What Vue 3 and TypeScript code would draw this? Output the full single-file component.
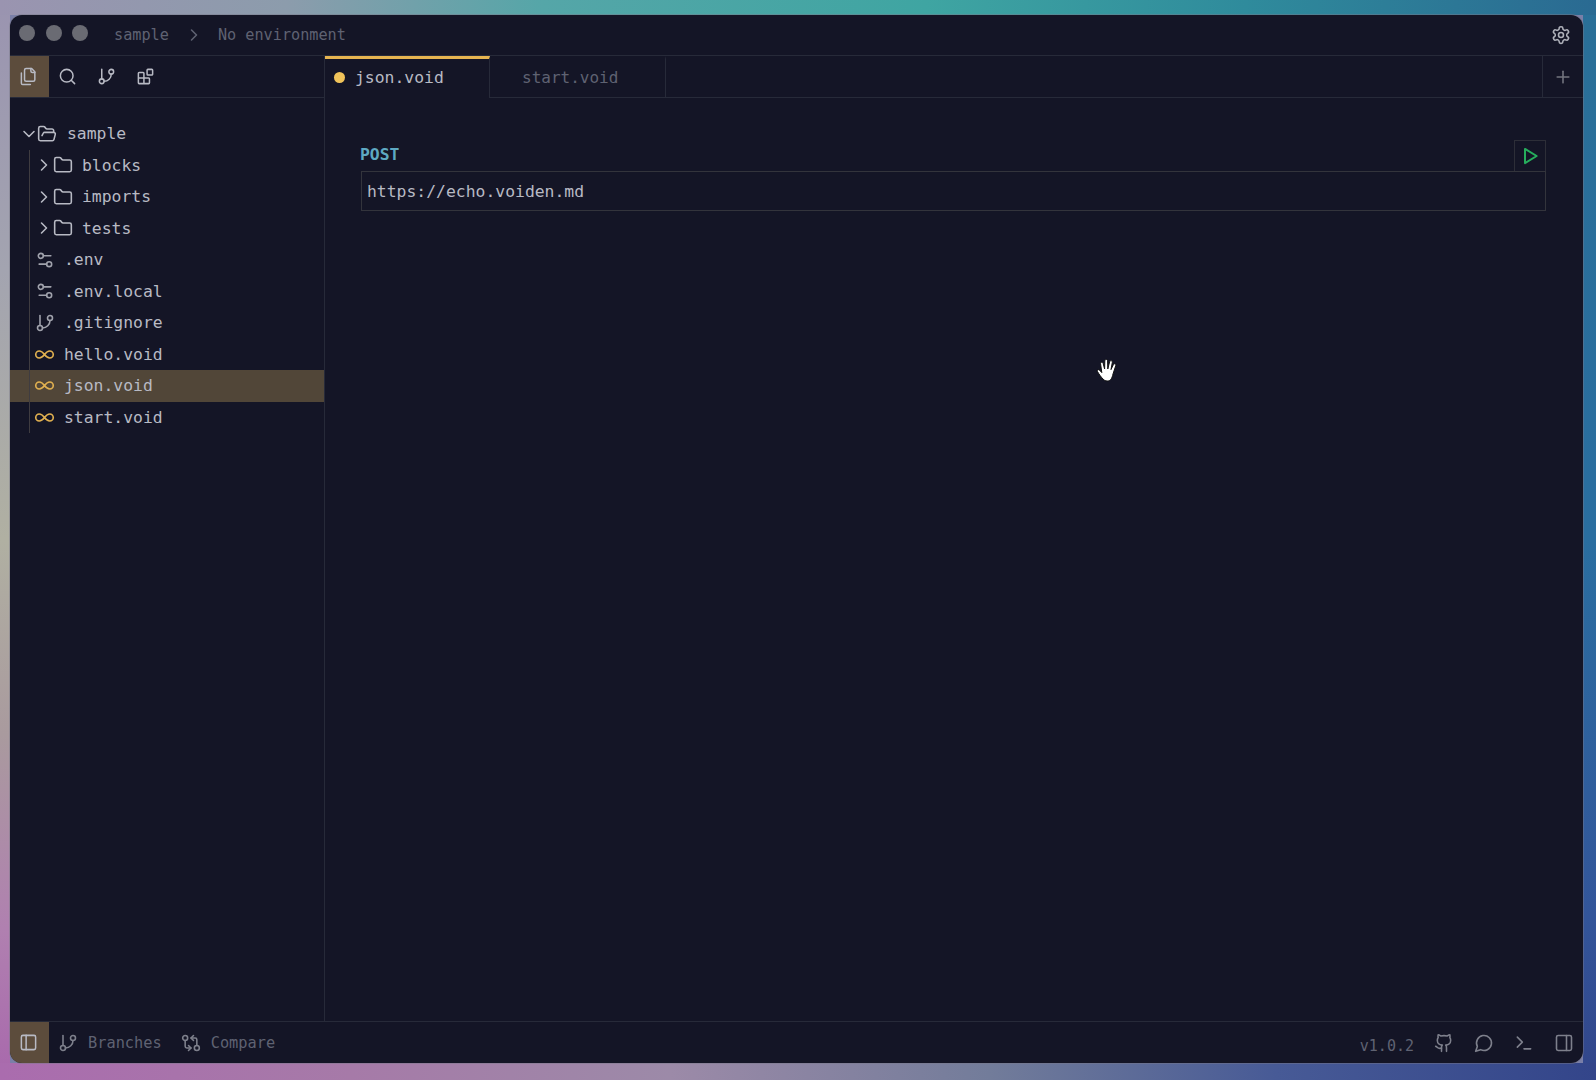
<script setup lang="ts">
const icons: Record<string, string> = {
  files:
    '<path d="M20 7h-3a2 2 0 0 1-2-2V2"/><path d="M9 18a2 2 0 0 1-2-2V4a2 2 0 0 1 2-2h7l4 4v10a2 2 0 0 1-2 2Z"/><path d="M3 7.6v12.8A1.6 1.6 0 0 0 4.6 22h9.8"/>',
  search: '<circle cx="11" cy="11" r="8"/><path d="m21 21-4.3-4.3"/>',
  branch:
    '<path d="M6 3v12"/><circle cx="18" cy="6" r="3"/><circle cx="6" cy="18" r="3"/><path d="M18 9a9 9 0 0 1-9 9"/>',
  blocks:
    '<rect x="14" y="3" width="7" height="7" rx="1"/><path d="M10 21V8a1 1 0 0 0-1-1H4a1 1 0 0 0-1 1v12a1 1 0 0 0 1 1h12a1 1 0 0 0 1-1v-5a1 1 0 0 0-1-1H3"/>',
  folder:
    '<path d="M20 20a2 2 0 0 0 2-2V8a2 2 0 0 0-2-2h-7.9a2 2 0 0 1-1.69-.9L9.6 3.9A2 2 0 0 0 7.93 3H4a2 2 0 0 0-2 2v13a2 2 0 0 0 2 2Z"/>',
  folderOpen:
    '<path d="m6 14 1.5-2.9A2 2 0 0 1 9.24 10H20a2 2 0 0 1 1.94 2.5l-1.54 6a2 2 0 0 1-1.95 1.5H4a2 2 0 0 1-2-2V5a2 2 0 0 1 2-2h3.9a2 2 0 0 1 1.69.9l.81 1.2a2 2 0 0 0 1.67.9H18a2 2 0 0 1 2 2v2"/>',
  right: '<path d="m9 18 6-6-6-6"/>',
  down: '<path d="m6 9 6 6 6-6"/>',
  sliders:
    '<path d="M14 17H5"/><path d="M19 7h-9"/><circle cx="17" cy="17" r="3"/><circle cx="7" cy="7" r="3"/>',
  infinity:
    '<path d="M12 12c-2-2.67-4-4-6-4a4 4 0 1 0 0 8c2 0 4-1.33 6-4Zm0 0c2 2.67 4 4 6 4a4 4 0 0 0 0-8c-2 0-4 1.33-6 4Z"/>',
  gear:
    '<path d="M12.22 2h-.44a2 2 0 0 0-2 2v.18a2 2 0 0 1-1 1.73l-.43.25a2 2 0 0 1-2 0l-.15-.08a2 2 0 0 0-2.73.73l-.22.38a2 2 0 0 0 .73 2.73l.15.1a2 2 0 0 1 1 1.72v.51a2 2 0 0 1-1 1.74l-.15.09a2 2 0 0 0-.73 2.73l.22.38a2 2 0 0 0 2.73.73l.15-.08a2 2 0 0 1 2 0l.43.25a2 2 0 0 1 1 1.73V20a2 2 0 0 0 2 2h.44a2 2 0 0 0 2-2v-.18a2 2 0 0 1 1-1.73l.43-.25a2 2 0 0 1 2 0l.15.08a2 2 0 0 0 2.73-.73l.22-.39a2 2 0 0 0-.73-2.73l-.15-.08a2 2 0 0 1-1-1.74v-.5a2 2 0 0 1 1-1.74l.15-.09a2 2 0 0 0 .73-2.73l-.22-.38a2 2 0 0 0-2.73-.73l-.15.08a2 2 0 0 1-2 0l-.43-.25a2 2 0 0 1-1-1.73V4a2 2 0 0 0-2-2z"/><circle cx="12" cy="12" r="3"/>',
  plus: '<path d="M5 12h14"/><path d="M12 5v14"/>',
  play: '<path d="M6 3.500 20 12 6 20.500Z"/>',
  panelLeft: '<rect x="3" y="3" width="18" height="18" rx="2"/><path d="M9 3v18"/>',
  panelRight: '<rect x="3" y="3" width="18" height="18" rx="2"/><path d="M15 3v18"/>',
  compare:
    '<circle cx="5" cy="6" r="3"/><path d="M12 6h5a2 2 0 0 1 2 2v7"/><path d="m15 9-3-3 3-3"/><circle cx="19" cy="18" r="3"/><path d="M12 18H7a2 2 0 0 1-2-2V9"/><path d="m9 15 3 3-3 3"/>',
  github:
    '<path d="M15 22v-4a4.800 4.800 0 0 0-1-3.500c3 0 6-2 6-5.500.08-1.250-.27-2.480-1-3.500.28-1.150.28-2.350 0-3.500 0 0-1 0-3 1.500-2.640-.5-5.360-.5-8 0C6 2 5 2 5 2c-.3 1.150-.3 2.350 0 3.500A5.403 5.403 0 0 0 4 9c0 3.500 3 5.500 6 5.500-.39.49-.68 1.050-.85 1.650-.17.6-.22 1.230-.15 1.850v4"/><path d="M9 18c-4.510 2-5-2-7-2"/>',
  chat: '<path d="M7.900 20A9 9 0 1 0 4 16.100L2 22Z"/>',
  terminal: '<path d="m4 17 6-6-6-6"/><path d="M12 19h8"/>',
};

const toolbar = ["files", "search", "branch", "blocks"];
const folders = ["blocks", "imports", "tests"];
const files = [
  { name: ".env", icon: "sliders" },
  { name: ".env.local", icon: "sliders" },
  { name: ".gitignore", icon: "branch" },
  { name: "hello.void", icon: "infinity", isVoid: true },
  { name: "json.void", icon: "infinity", isVoid: true, active: true },
  { name: "start.void", icon: "infinity", isVoid: true },
];
const statusIcons = ["github", "chat", "terminal", "panelRight"];
</script>

<template>
  <div class="desktop">
    <div class="window">
      <header class="titlebar">
        <div class="lights">
          <span></span>
          <span></span>
          <span></span>
        </div>
        <span class="crumb">sample</span>
        <svg class="icon crumb-sep" viewBox="0 0 24 24" v-html="icons.right"></svg>
        <span class="crumb">No environment</span>
        <svg class="icon gear" viewBox="0 0 24 24" v-html="icons.gear"></svg>
      </header>

      <div class="main">
        <aside class="sidebar">
          <div class="toolbar">
            <button
              v-for="(name, i) in toolbar"
              :key="name"
              class="tool"
              :class="{ on: i === 0 }"
            >
              <svg class="icon" viewBox="0 0 24 24" v-html="icons[name]"></svg>
            </button>
          </div>

          <div class="tree">
            <div class="row root">
              <svg class="icon chev" viewBox="0 0 24 24" v-html="icons.down"></svg>
              <svg class="icon folder" viewBox="0 0 24 24" v-html="icons.folderOpen"></svg>
              <span>sample</span>
            </div>
            <div class="children">
              <div v-for="f in folders" :key="f" class="row dir">
                <svg class="icon chev" viewBox="0 0 24 24" v-html="icons.right"></svg>
                <svg class="icon folder" viewBox="0 0 24 24" v-html="icons.folder"></svg>
                <span>{{ f }}</span>
              </div>
              <div
                v-for="f in files"
                :key="f.name"
                class="row file"
                :class="{ active: f.active, isvoid: f.isVoid }"
              >
                <svg class="icon ficon" viewBox="0 0 24 24" v-html="icons[f.icon]"></svg>
                <span>{{ f.name }}</span>
              </div>
            </div>
          </div>
        </aside>

        <section class="editor">
          <div class="tabs">
            <div class="tab current">
              <span class="dot"></span>
              <span>json.void</span>
            </div>
            <div class="tab other">start.void</div>
            <div class="tab-fill"></div>
            <button class="tab-add">
              <svg class="icon" viewBox="0 0 24 24" v-html="icons.plus"></svg>
            </button>
          </div>

          <div class="doc">
            <div class="req-head">
              <span class="method">POST</span>
              <button class="run">
                <svg class="icon" viewBox="0 0 24 24" v-html="icons.play"></svg>
              </button>
            </div>
            <div class="url">https://echo.voiden.md</div>
          </div>
        </section>
      </div>

      <footer class="statusbar">
        <button class="tool on">
          <svg class="icon" viewBox="0 0 24 24" v-html="icons.panelLeft"></svg>
        </button>
        <div class="st-item branches">
          <svg class="icon" viewBox="0 0 24 24" v-html="icons.branch"></svg>
          <span>Branches</span>
        </div>
        <div class="st-item">
          <svg class="icon" viewBox="0 0 24 24" v-html="icons.compare"></svg>
          <span>Compare</span>
        </div>
        <div class="st-right">
          <span class="version">v1.0.2</span>
          <svg
            v-for="name in statusIcons"
            :key="name"
            class="icon"
            viewBox="0 0 24 24"
            v-html="icons[name]"
          ></svg>
        </div>
      </footer>
    </div>

    <svg class="cursor" viewBox="0 0 22 24">
      <path
        d="M7 21C5 19 2.500 15.500 1.500 13.500 0.800 12 2.500 11 3.600 12.200L5.800 14.600 4.600 6C4.300 4 6.800 3.600 7.200 5.600L8.600 11 8.800 3C8.800 1 11.600 1 11.600 3L11.800 11 13.600 3.800C14 1.900 16.600 2.400 16.300 4.400L15 11.600 17.400 6.600C18.200 5 20.400 6 19.700 7.800L17 16C16 20.500 14.600 23 11.200 23 9.400 23 8.200 22.300 7 21Z"
      />
    </svg>
  </div>
</template>

<style scoped>
.desktop {
  position: relative;
  width: 1596px;
  height: 1080px;
  box-sizing: border-box;
  padding: 15px 13px 17px 10px;
  overflow: hidden;
  background-color: #7a7fa8;
  background-repeat: no-repeat;
  background-image:
    linear-gradient(90deg, #9a94b0 0%, #8c9cac 18%, #55a6a8 34%, #3fa5a2 58%, #2f8b9c 78%, #2a6a92 100%),
    linear-gradient(90deg, #aa6cae 0%, #a67aa8 22%, #9c8aa8 42%, #727c9a 62%, #475a96 80%, #33458a 100%),
    linear-gradient(180deg, #9a94b0 0%, #a3a4b0 25%, #b0b0a2 50%, #a99a9e 68%, #b080b0 86%, #a868ac 100%),
    linear-gradient(180deg, #2a6f97 0%, #2a6ea0 50%, #33559a 85%, #32458a 100%);
  background-size:
    100% 15px,
    100% 17px,
    10px 100%,
    13px 100%;
  background-position:
    0 0,
    0 100%,
    0 0,
    100% 0;
  font-family: "DejaVu Sans Mono", "Liberation Mono", monospace;
  font-size: 16.4px;
  color: #b8bac4;
}

.window {
  display: flex;
  flex-direction: column;
  height: 100%;
  background: #141526;
  border-radius: 12px;
  box-shadow: 0 0 0 1px rgba(120, 120, 135, 0.45);
  overflow: hidden;
}

.icon {
  display: block;
  width: 20px;
  height: 20px;
  flex: none;
  fill: none;
  stroke: currentColor;
  stroke-width: 1.9;
  stroke-linecap: round;
  stroke-linejoin: round;
}

button {
  padding: 0;
  border: 0;
  background: none;
  color: inherit;
  font: inherit;
}

.titlebar {
  display: flex;
  align-items: center;
  height: 41px;
  flex: none;
  padding: 0 12px 0 9px;
  box-sizing: border-box;
  border-bottom: 1px solid #272a39;
  color: #5f6272;
  font-size: 15.2px;
}

.lights {
  display: flex;
  gap: 10.500px;
  margin-right: 26px;
  margin-top: -5px;
}

.lights span {
  width: 16px;
  height: 16px;
  border-radius: 50%;
  background: #6a6b73;
}

.crumb-sep {
  margin: 0 14px 0 15px;
}

.gear {
  margin-left: auto;
  color: #aeb0b9;
}

.main {
  display: flex;
  flex: 1;
  min-height: 0;
}

.sidebar {
  width: 315px;
  flex: none;
  box-sizing: border-box;
  border-right: 1px solid #272a39;
}

.toolbar {
  display: flex;
  height: 42px;
  box-sizing: border-box;
  border-bottom: 1px solid #272a39;
}

.tool {
  display: flex;
  align-items: center;
  justify-content: center;
  width: 39px;
  height: 100%;
  padding-right: 2px;
  box-sizing: border-box;
  color: #b8bac4;
}

.tool .icon {
  width: 19px;
  height: 19px;
}

.tool.on {
  background: #5c4c3c;
}

.tree {
  padding-top: 20px;
}

.row {
  display: flex;
  align-items: center;
  height: 31.5px;
}

.root {
  padding-left: 9px;
}

.root .folder {
  margin: 0 10px 0 -2px;
}

.children {
  position: relative;
}

.children::before {
  content: "";
  position: absolute;
  left: 19px;
  top: 0;
  bottom: 0;
  width: 1px;
  background: #3f3c40;
}

.dir {
  padding-left: 24px;
}

.dir .folder {
  margin: 0 9px 0 -1px;
}

.file {
  padding-left: 25px;
}

.ficon {
  margin-right: 9px;
  color: #a0a2ac;
}

.isvoid {
  padding-left: 24px;
}

.isvoid .ficon {
  width: 21px;
  height: 21px;
  color: #e0b050;
}

.file.active {
  background: #514638;
}

.editor {
  flex: 1;
  min-width: 0;
}

.tabs {
  display: flex;
  height: 42px;
}

.tab {
  display: flex;
  align-items: center;
  box-sizing: border-box;
  padding-bottom: 2px;
  border-top: 3px solid transparent;
  border-right: 1px solid #272a39;
}

.current {
  width: 165px;
  padding-left: 9px;
  gap: 10px;
  border-top-color: #e6b450;
  color: #b8bac4;
}

.dot {
  width: 11px;
  height: 11px;
  border-radius: 50%;
  background: #f0c35a;
}

.other {
  width: 176px;
  padding-left: 32px;
  font-size: 16px;
  color: #5f6272;
  border-bottom: 1px solid #272a39;
}

.tab-fill {
  flex: 1;
  border-bottom: 1px solid #272a39;
}

.tab-add {
  display: flex;
  align-items: center;
  justify-content: center;
  width: 41px;
  box-sizing: border-box;
  border-left: 1px solid #272a39;
  border-bottom: 1px solid #272a39;
  color: #73757f;
}

.doc {
  padding: 42px 37px 0 36px;
}

.req-head {
  display: flex;
  align-items: flex-end;
  justify-content: space-between;
}

.method {
  margin: 0 0 2px -1px;
  font-weight: 700;
  line-height: 28px;
  color: #5ea9c2;
}

.run {
  display: flex;
  align-items: center;
  justify-content: center;
  width: 32px;
  height: 31px;
  box-sizing: border-box;
  border: 1px solid #2d2e38;
  border-bottom: 0;
  color: #26ad5c;
}

.run .icon {
  width: 20px;
  height: 20px;
  stroke-width: 2.400;
}

.url {
  height: 40px;
  box-sizing: border-box;
  padding-left: 5px;
  line-height: 40px;
  border: 1px solid #33343c;
  color: #b8bac4;
}

.statusbar {
  display: flex;
  align-items: center;
  height: 42px;
  flex: none;
  box-sizing: border-box;
  border-top: 1px solid #272a39;
  color: #5f6272;
  font-size: 15.3px;
}

.st-item {
  display: flex;
  align-items: center;
  gap: 10px;
  margin-right: 19px;
}

.st-item .icon {
  color: #7e808c;
}

.branches {
  margin-left: 9px;
}

.st-right {
  display: flex;
  align-items: center;
  gap: 20px;
  margin-left: auto;
  padding-right: 9px;
  color: #7e808c;
}

.version {
  margin-top: 7px;
  font-size: 15px;
  color: #5f6272;
}

.cursor {
  position: absolute;
  left: 1096px;
  top: 358px;
  width: 22px;
  height: 24px;
  fill: #fff;
  stroke: #111;
  stroke-width: 1;
  stroke-linejoin: round;
}
</style>
